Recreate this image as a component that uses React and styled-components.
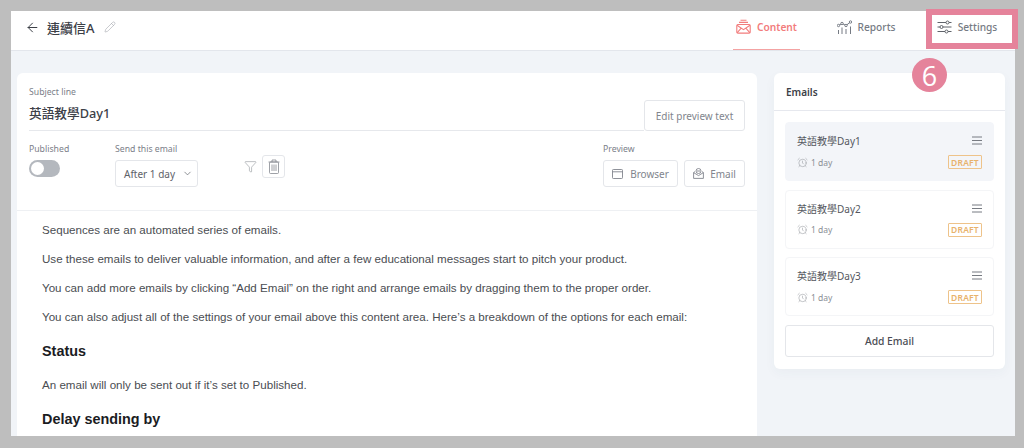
import styled, {createGlobalStyle} from 'styled-components'
import {ArrowLeft, Pencil, ChevronDown, Filter, AlarmClock} from 'lucide-react'

const GlobalStyle = createGlobalStyle`
  html, body {
    margin: 0;
    padding: 0;
    background: #bebebe;
  }
  * {
    box-sizing: border-box;
  }
`

const uiFont = `'Noto Sans', 'Open Sans', 'Noto Sans CJK TC', sans-serif`

const Page = styled.div`
  width: 1024px;
  height: 448px;
  padding: 11px 9px 12px 11px;
  background: #bebebe;
  position: relative;
  overflow: hidden;
  font-family: ${uiFont};
`

const Frame = styled.div`
  height: 425px;
  background: #f1f4f8;
  display: flex;
  flex-direction: column;
  overflow: hidden;
`

const Header = styled.header`
  height: 40px;
  flex: none;
  background: #fff;
  border-bottom: 1px solid #e3e6ec;
  display: flex;
  align-items: center;
  padding: 0 0 7px 14px;
`

const BackLink = styled.span`
  display: flex;
  color: #3c4047;
  margin-right: 7px;
`

const Title = styled.h1`
  margin: 0 9px 0 0;
  font-size: 13px;
  font-weight: 500;
  color: #3c4047;
`

const Tabs = styled.nav`
  margin: 0 0 -7px auto;
  display: flex;
  height: 40px;
`

const Tab = styled.a`
  display: flex;
  align-items: center;
  justify-content: center;
  gap: 6px;
  width: ${props => props.$width}px;
  margin-right: ${props => props.$gap}px;
  height: 39px;
  padding-bottom: 6px;
  font-size: 10.2px;
  font-weight: ${props => (props.$active ? 600 : 500)};
  color: ${props => (props.$active ? '#f27c7c' : '#767b84')};
  border-bottom: 1px solid ${props => (props.$active ? '#f4a3a3' : 'transparent')};
`

const Main = styled.main`
  flex: 1;
  display: flex;
  align-items: flex-start;
  gap: 17px;
  padding: 22px 10px 0 6px;
`

const EditorCard = styled.section`
  width: 740px;
  height: 400px;
  flex: none;
  background: #fff;
  border-radius: 6px 6px 0 0;
`

const Settings = styled.div`
  padding: 12px 12px 0 12px;
  height: 138px;
  border-bottom: 1px solid #eef0f3;
`

const SubjectRow = styled.div`
  display: flex;
  align-items: flex-end;
  height: 46px;
`

const SubjectInfo = styled.div`
  flex: 1;
  height: 100%;
  padding-top: 1px;
  border-bottom: 1px solid #e6e8ec;
`

const FieldLabel = styled.div`
  font-size: 8.7px;
  line-height: 12px;
  color: #7b8089;
  margin-bottom: ${props => props.$gap || 0}px;
`

const SubjectText = styled.div`
  margin-top: 5px;
  font-size: 12.7px;
  line-height: 20px;
  font-weight: 500;
  color: #3c4047;
`

const OutlineButton = styled.button`
  display: flex;
  align-items: center;
  justify-content: center;
  gap: ${props => props.$gap || 0}px;
  width: ${props => props.$width}px;
  height: ${props => props.$height}px;
  padding: 0;
  background: #fff;
  border: 1px solid #e4e6ea;
  border-radius: 3px;
  font-family: ${uiFont};
  font-size: 10px;
  color: #81858d;
`

const OptionsRow = styled.div`
  display: flex;
  margin-top: 12px;
`

const Field = styled.div`
  width: ${props => props.$width}px;
  flex: none;
`

const Toggle = styled.div`
  width: 31px;
  height: 17px;
  border-radius: 9px;
  background: #b4b8be;
  padding: 2px;
`

const ToggleKnob = styled.div`
  width: 13px;
  height: 13px;
  border-radius: 50%;
  background: #fff;
`

const Select = styled.div`
  width: 83px;
  height: 27px;
  display: flex;
  align-items: center;
  gap: 7px;
  padding-left: 8px;
  border: 1px solid #e4e6ea;
  border-radius: 3px;
  font-size: 10px;
  color: #5d6169;
`

const ActionIcons = styled.div`
  display: flex;
  align-items: flex-start;
  gap: 5px;
  padding-top: 12px;
  margin-left: 46px;
  color: #858990;
`

const FilterBox = styled.span`
  display: flex;
  margin-top: 5px;
`

const TrashButton = styled.span`
  width: 23px;
  height: 23px;
  display: flex;
  align-items: center;
  justify-content: center;
  border: 1px solid #e4e6ea;
  border-radius: 3px;
`

const PreviewField = styled.div`
  margin-left: auto;
`

const PreviewButtons = styled.div`
  display: flex;
  gap: 6px;
`

const Article = styled.article`
  padding: 10px 24px 0 25px;
  font-family: 'Liberation Sans', Arial, sans-serif;
`

const Paragraph = styled.p`
  margin: 0 0 ${props => props.$after || 12}px;
  font-size: 11.6px;
  line-height: 17px;
  color: #4a4d52;
`

const Heading = styled.h3`
  margin: 0 0 ${props => props.$after || 15}px;
  font-size: 14.4px;
  line-height: 20px;
  font-weight: 700;
  color: #1b1c1f;
`

const EmailsCard = styled.aside`
  width: 231px;
  flex: none;
  background: #fff;
  border-radius: 6px;
  box-shadow: 0 4px 12px rgba(60, 70, 90, 0.04);
  padding-bottom: 12px;
`

const EmailsTitle = styled.div`
  height: 38px;
  display: flex;
  align-items: center;
  padding-left: 12px;
  border-bottom: 1px solid #e6e8ee;
  font-size: 10px;
  font-weight: 600;
  color: #3c4047;
`

const EmailList = styled.div`
  display: flex;
  flex-direction: column;
  gap: 8.5px;
  padding: 11px 11px 9px;
`

const EmailItem = styled.div`
  height: 59px;
  padding: 9px 11px 0;
  border-radius: 4px;
  background: ${props => (props.$selected ? '#f3f5f9' : '#fff')};
  border: 1px solid ${props => (props.$selected ? '#f3f5f9' : '#f4f5f7')};
`

const ItemRow = styled.div`
  display: flex;
  justify-content: space-between;
  align-items: center;
  height: ${props => props.$height}px;
  margin-bottom: ${props => props.$after || 0}px;
`

const ItemName = styled.span`
  font-size: 10px;
  color: #54575e;
`

const Delay = styled.span`
  display: flex;
  align-items: center;
  gap: 3px;
  font-size: 8.5px;
  color: #8b8f96;
`

const DraftBadge = styled.span`
  width: 34px;
  height: 14px;
  display: flex;
  align-items: center;
  justify-content: center;
  border: 1px solid #eec38a;
  border-radius: 1px;
  font-size: 8.5px;
  font-weight: 600;
  letter-spacing: 0.2px;
  color: #e8b26c;
`

const AddButton = styled.button`
  display: block;
  width: 209px;
  height: 32px;
  margin: 0 11px;
  padding: 0;
  background: #fff;
  border: 1px solid #e4e6ea;
  border-radius: 3px;
  font-family: ${uiFont};
  font-size: 10.3px;
  font-weight: 500;
  color: #4a4d54;
`

const Highlight = styled.div`
  position: absolute;
  left: 926px;
  top: 9px;
  width: 92px;
  height: 40px;
  border: 6px solid #e5839b;
`

const StepBadge = styled.div`
  position: absolute;
  left: 912px;
  top: 58px;
  width: 35px;
  height: 34px;
  border-radius: 50%;
  background: #e5839b;
  color: #fff;
  display: flex;
  align-items: center;
  justify-content: center;
  font-family: 'Open Sans', sans-serif;
  font-size: 27px;
  font-weight: 500;
`

const ContentIcon = () => (
  <svg width="15" height="15" viewBox="0 0 15 15" fill="none" stroke="currentColor" strokeWidth="1.1">
    <path d="M4.5 1.2h6M3 3.4h9" />
    <rect x="0.8" y="5.5" width="13.4" height="8.6" rx="1.2" />
    <path d="M1 6.3l6.5 4.3 6.5-4.3M1 13.8l4.2-4.6M14 13.8L9.8 9.2" />
  </svg>
)

const ReportsIcon = () => (
  <svg width="15" height="14" viewBox="0 0 15 14" fill="none" stroke="currentColor" strokeWidth="1">
    <path d="M1.5 5.5L5 3.5L9 5.5L13.5 2" />
    <circle cx="1.5" cy="5.5" r="1.2" fill="#fff" />
    <circle cx="5" cy="3.5" r="1.2" fill="#fff" />
    <circle cx="9" cy="5.5" r="1.2" fill="#fff" />
    <circle cx="13.5" cy="2" r="1.2" fill="#fff" />
    <path d="M1.5 10v4M5 7.5V14M9 9v5M13.5 6.5V14" />
  </svg>
)

const SlidersIcon = () => (
  <svg width="15" height="14" viewBox="0 0 15 14" fill="none" stroke="#5f636a" strokeWidth="1">
    <path d="M0.5 2.5H9M12 2.5H14.5M0.5 7H3M6 7H14.5M0.5 11.5H8M11 11.5H14.5" />
    <circle cx="10.5" cy="2.5" r="1.5" />
    <circle cx="4.5" cy="7" r="1.5" />
    <circle cx="9.5" cy="11.5" r="1.5" />
  </svg>
)

const BrowserIcon = () => (
  <svg width="11" height="10" viewBox="0 0 11 10" fill="none" stroke="currentColor" strokeWidth="0.9">
    <rect x="0.5" y="0.5" width="10" height="9" rx="0.8" />
    <path d="M0.5 2.8h10" />
  </svg>
)

const MailOpenIcon = () => (
  <svg width="11" height="11" viewBox="0 0 11 11" fill="none" stroke="currentColor" strokeWidth="0.9">
    <path d="M0.6 4.6L2 3.6M10.4 4.6L9 3.6M0.6 4.6v5.8h9.8V4.6L5.5 7.6z" />
    <circle cx="5.5" cy="3" r="2.5" />
    <path d="M4 3h3" />
  </svg>
)

const TrashIcon = () => (
  <svg width="12" height="15" viewBox="0 0 12 15" fill="none" stroke="currentColor" strokeWidth="0.8">
    <path d="M0.5 3h11M4 3V1h4v2" />
    <rect x="1.5" y="3" width="9" height="11.5" rx="1" />
    <path d="M4 5.5v6.5M6 5.5v6.5M8 5.5v6.5" />
  </svg>
)

const MenuIcon = () => (
  <svg width="10" height="9" viewBox="0 0 10 9" fill="none" stroke="#777b82" strokeWidth="1">
    <path d="M0 1h10M0 4.5h10M0 8h10" />
  </svg>
)

const emails = [
  {id: 1, name: '英語教學Day1', selected: true},
  {id: 2, name: '英語教學Day2'},
  {id: 3, name: '英語教學Day3'},
]

const App = () => (
  <>
    <GlobalStyle />
    <Page>
      <Frame>
        <Header>
          <BackLink>
            <ArrowLeft size={15} strokeWidth={1.6} />
          </BackLink>
          <Title>連續信A</Title>
          <Pencil size={12} strokeWidth={1.2} color="#a4a8ae" />
          <Tabs>
            <Tab $active $width={67} $gap={32}>
              <ContentIcon />
              Content
            </Tab>
            <Tab $width={68} $gap={33}>
              <ReportsIcon />
              Reports
            </Tab>
            <Tab $width={68} $gap={14}>
              <SlidersIcon />
              Settings
            </Tab>
          </Tabs>
        </Header>
        <Main>
          <EditorCard>
            <Settings>
              <SubjectRow>
                <SubjectInfo>
                  <FieldLabel>Subject line</FieldLabel>
                  <SubjectText>英語教學Day1</SubjectText>
                </SubjectInfo>
                <OutlineButton $width={101} $height={31}>Edit preview text</OutlineButton>
              </SubjectRow>
              <OptionsRow>
                <Field $width={86}>
                  <FieldLabel $gap={5}>Published</FieldLabel>
                  <Toggle>
                    <ToggleKnob />
                  </Toggle>
                </Field>
                <Field $width={83}>
                  <FieldLabel $gap={5}>Send this email</FieldLabel>
                  <Select>
                    After 1 day
                    <ChevronDown size={11} strokeWidth={1.5} />
                  </Select>
                </Field>
                <ActionIcons>
                  <FilterBox>
                    <Filter size={13} strokeWidth={1} />
                  </FilterBox>
                  <TrashButton>
                    <TrashIcon />
                  </TrashButton>
                </ActionIcons>
                <PreviewField>
                  <FieldLabel $gap={5}>Preview</FieldLabel>
                  <PreviewButtons>
                    <OutlineButton $width={75} $height={27} $gap={7}>
                      <BrowserIcon />
                      Browser
                    </OutlineButton>
                    <OutlineButton $width={61} $height={27} $gap={6}>
                      <MailOpenIcon />
                      Email
                    </OutlineButton>
                  </PreviewButtons>
                </PreviewField>
              </OptionsRow>
            </Settings>
            <Article>
              <Paragraph>Sequences are an automated series of emails.</Paragraph>
              <Paragraph>Use these emails to deliver valuable information, and after a few educational messages start to pitch your product.</Paragraph>
              <Paragraph>You can add more emails by clicking “Add Email” on the right and arrange emails by dragging them to the proper order.</Paragraph>
              <Paragraph $after={16}>You can also adjust all of the settings of your email above this content area. Here’s a breakdown of the options for each email:</Paragraph>
              <Heading>Status</Heading>
              <Paragraph $after={16}>An email will only be sent out if it’s set to Published.</Paragraph>
              <Heading>Delay sending by</Heading>
            </Article>
          </EditorCard>
          <EmailsCard>
            <EmailsTitle>Emails</EmailsTitle>
            <EmailList>
              {emails.map(email => (
                <EmailItem key={email.id} $selected={email.selected}>
                  <ItemRow $height={17} $after={6}>
                    <ItemName>{email.name}</ItemName>
                    <MenuIcon />
                  </ItemRow>
                  <ItemRow $height={14}>
                    <Delay>
                      <AlarmClock size={11} strokeWidth={1.1} />
                      1 day
                    </Delay>
                    <DraftBadge>DRAFT</DraftBadge>
                  </ItemRow>
                </EmailItem>
              ))}
            </EmailList>
            <AddButton>Add Email</AddButton>
          </EmailsCard>
        </Main>
      </Frame>
      <Highlight />
      <StepBadge>6</StepBadge>
    </Page>
  </>
)

export default App
